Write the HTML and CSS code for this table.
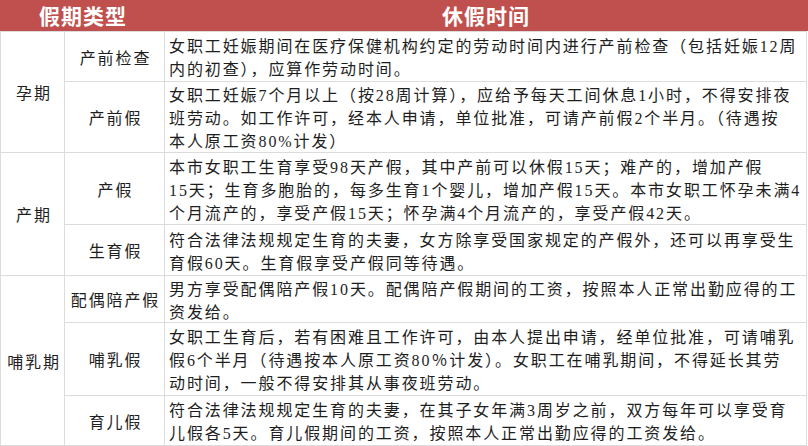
FILE: index.html
```html
<!DOCTYPE html>
<html lang="zh-CN">
<head>
<meta charset="utf-8">
<title>假期类型</title>
<link rel="stylesheet" href="styles.css">
</head>
<body>
<div class="sheet">
  <div class="head">
    <div class="head-type">假期类型</div>
    <div class="head-time">休假时间</div>
  </div>
  <div class="grid">
    <div class="group g1">孕期</div>
    <div class="label">产前检查</div>
    <div class="desc">女职工妊娠期间在医疗保健机构约定的劳动时间内进行产前检查（包括妊娠12周<br>内的初查），应算作劳动时间。</div>
    <div class="label">产前假</div>
    <div class="desc">女职工妊娠7个月以上（按28周计算），应给予每天工间休息1小时，不得安排夜<br>班劳动。如工作许可，经本人申请，单位批准，可请产前假2个半月。（待遇按<br>本人原工资80%计发）</div>

    <div class="group g2">产期</div>
    <div class="label">产假</div>
    <div class="desc">本市女职工生育享受98天产假，其中产前可以休假15天；难产的，增加产假<br>15天；生育多胞胎的，每多生育1个婴儿，增加产假15天。本市女职工怀孕未满4<br>个月流产的，享受产假15天；怀孕满4个月流产的，享受产假42天。</div>
    <div class="label">生育假</div>
    <div class="desc">符合法律法规规定生育的夫妻，女方除享受国家规定的产假外，还可以再享受生<br>育假60天。生育假享受产假同等待遇。</div>

    <div class="group g3">哺乳期</div>
    <div class="label">配偶陪产假</div>
    <div class="desc">男方享受配偶陪产假10天。配偶陪产假期间的工资，按照本人正常出勤应得的工<br>资发给。</div>
    <div class="label">哺乳假</div>
    <div class="desc">女职工生育后，若有困难且工作许可，由本人提出申请，经单位批准，可请哺乳<br>假6个半月（待遇按本人原工资80％计发）。女职工在哺乳期间，不得延长其劳<br>动时间，一般不得安排其从事夜班劳动。</div>
    <div class="label">育儿假</div>
    <div class="desc">符合法律法规规定生育的夫妻，在其子女年满3周岁之前，双方每年可以享受育<br>儿假各5天。育儿假期间的工资，按照本人正常出勤应得的工资发给。</div>
  </div>
</div>
</body>
</html>
```

FILE: styles.css
```css
html, body {
  margin: 0;
  padding: 0;
  background: #ffffff;
}

body {
  font-family: "Noto Sans CJK SC", "Noto Sans", sans-serif;
  color: #1e1e1e;
}

.sheet {
  width: 808px;
}

.head {
  display: flex;
  height: 31px;
  background: #c0504d;
  color: #ffffff;
  font-weight: bold;
  font-size: 21px;
  letter-spacing: 1px;
  line-height: 31px;
}

.head-type {
  width: 166px;
  text-align: center;
}

.head-time {
  flex: 1;
  text-align: center;
  padding-right: 2px;
}

.grid {
  display: grid;
  width: 805px;
  grid-template-columns: 63px 99px 641px;
  grid-template-rows: 49px 70px 71px 50px 46px 72px 49px;
  gap: 1px;
  padding: 1px;
  background: #dcdcdc;
  font-family: "Liberation Serif", "Noto Sans CJK SC", serif;
  font-size: 16px;
  letter-spacing: 1.9px;
}

.grid > div {
  background: #ffffff;
  display: flex;
  align-items: center;
}

.group {
  grid-column: 1;
  justify-content: center;
  padding-left: 3px;
}

.g1 { grid-row: 1 / span 2; }
.g2 { grid-row: 3 / span 2; }
.g3 { grid-row: 5 / span 3; }

.label {
  grid-column: 2;
  justify-content: center;
  padding-left: 2px;
}

.desc {
  grid-column: 3;
  line-height: 23px;
  padding: 3px 0 0 4px;
  white-space: nowrap;
}
```
